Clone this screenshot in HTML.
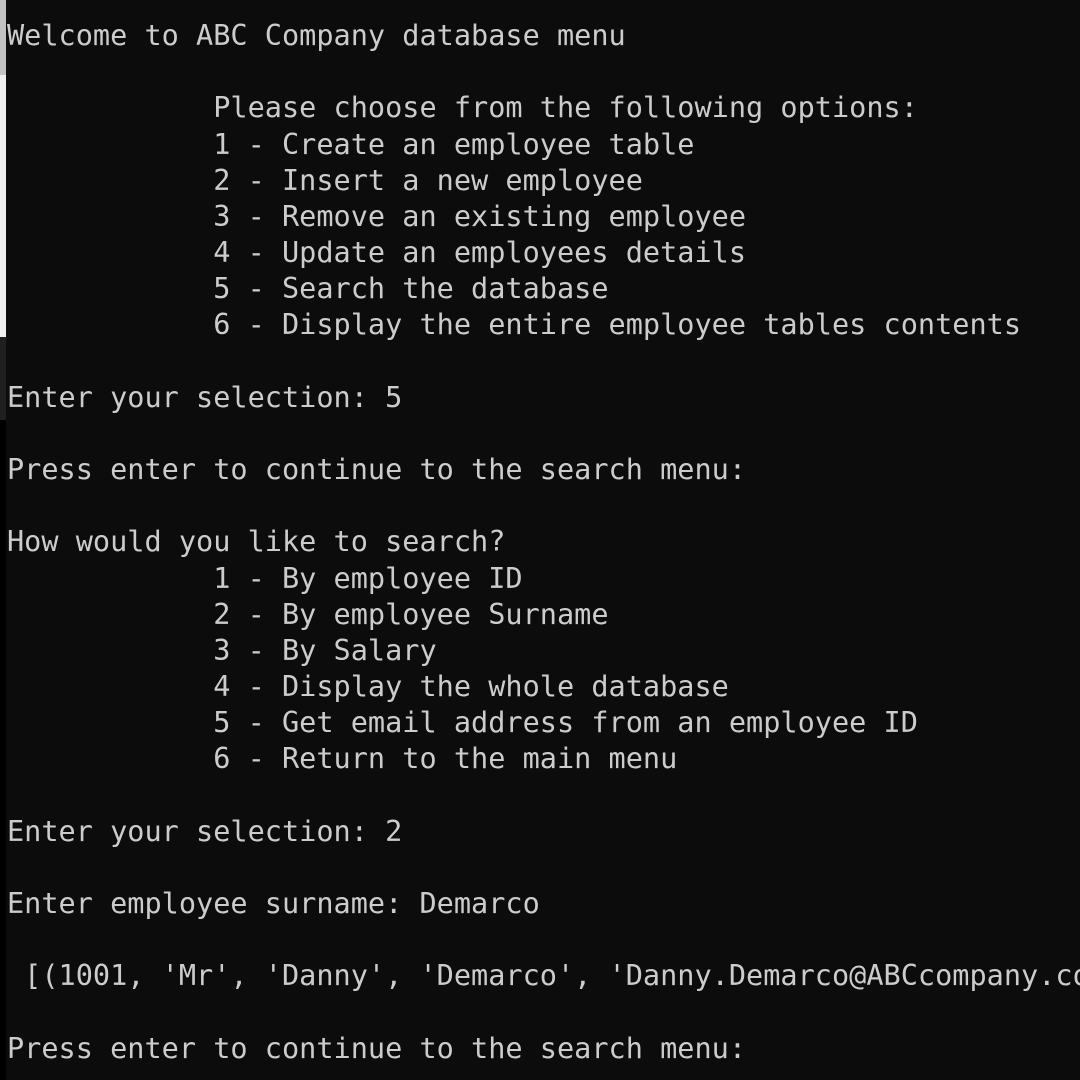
<!DOCTYPE html>
<html><head><meta charset="utf-8"><style>
html,body{margin:0;padding:0;background:#0c0c0c;width:1080px;height:1080px;overflow:hidden;position:relative}
pre{position:absolute;left:7px;top:17px;width:1073px;overflow:hidden;margin:0;font-family:"DejaVu Sans Mono","Liberation Mono",monospace;font-size:28.55px;line-height:36.17px;color:#cccccc;white-space:pre}
.s{position:absolute;left:0;width:6px}
</style></head><body>
<div class="s" style="top:0;height:75px;background:#c2c2c2"></div>
<div class="s" style="top:75px;height:262px;background:#f0f0f0"></div>
<div class="s" style="top:337px;height:83px;background:#1e1f1e"></div>
<div class="s" style="top:420px;height:660px;background:#000"></div>
<pre>Welcome to ABC Company database menu

            Please choose from the following options:
            1 - Create an employee table
            2 - Insert a new employee
            3 - Remove an existing employee
            4 - Update an employees details
            5 - Search the database
            6 - Display the entire employee tables contents

Enter your selection: 5

Press enter to continue to the search menu:

How would you like to search?
            1 - By employee ID
            2 - By employee Surname
            3 - By Salary
            4 - Display the whole database
            5 - Get email address from an employee ID
            6 - Return to the main menu

Enter your selection: 2

Enter employee surname: Demarco

 [(1001, 'Mr', 'Danny', 'Demarco', 'Danny.Demarco@ABCcompany.co

Press enter to continue to the search menu:</pre>
</body></html>
